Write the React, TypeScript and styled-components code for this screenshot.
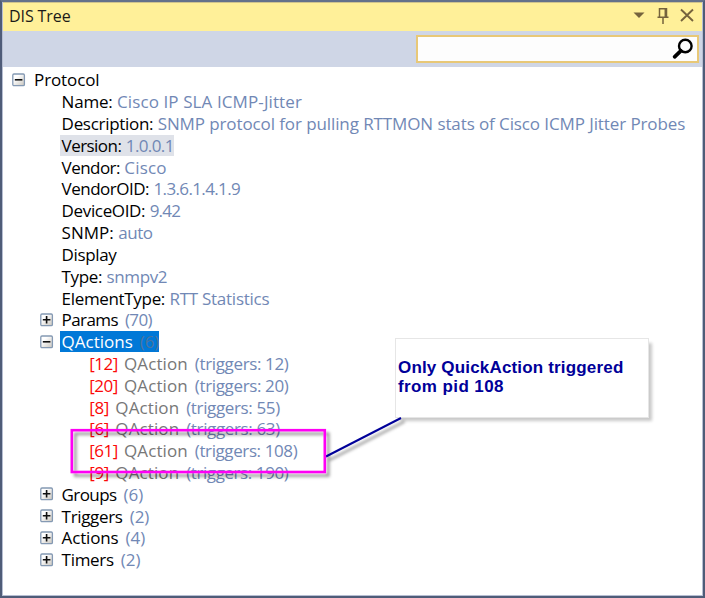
import React from "react";
import styled, { createGlobalStyle } from "styled-components";

const GlobalStyle = createGlobalStyle`
  body { margin: 0; background: #fff; }
  * { box-sizing: border-box; }
`;

const Window = styled.main`
  position: relative;
  width: 705px;
  height: 598px;
  padding: 1px;
  overflow: hidden;
  background: #fff;
  border: 2px solid #4f5c78;
  border-top-color: #64718a;
  box-shadow: inset 1px 0 #b6bed2, inset -1px 0 #b6bed2, inset 0 -1px #b6bed2, inset 0 1px #cfc38e;
  font-family: "Open Sans", "Noto Sans", sans-serif;
  font-size: 17px;
  color: #000;
`;

const TitleBar = styled.header`
  display: flex;
  align-items: center;
  height: 28px;
  padding: 0 7px 0 6px;
  background: #fff099;
`;

const Title = styled.h1`
  flex: 1;
  margin: 0;
  padding-bottom: 2px;
  font-size: 16px;
  font-weight: 400;
  line-height: 22px;
  letter-spacing: -0.1px;
  color: #1c1a18;
`;

const TitleIcons = styled.svg`
  display: block;
  width: 64px;
  height: 28px;
`;

const Toolbar = styled.div`
  display: flex;
  justify-content: flex-end;
  height: 36px;
  padding: 4px 3px 0 0;
  background: #cfd6e6;
`;

const SearchBox = styled.div`
  display: flex;
  justify-content: flex-end;
  width: 283px;
  height: 28px;
  background: #fdfdfd;
  border: 2px solid #e8c877;
`;

const SearchIcon = styled.svg`
  display: block;
  width: 30px;
  height: 24px;
`;

const Tree = styled.ul`
  margin: 0;
  padding: 2px 0 0;
  list-style: none;
`;

const Row = styled.li<{ $depth: number }>`
  display: flex;
  align-items: center;
  height: 21.82px;
  padding-left: ${(p) => 9 + p.$depth * 27.6}px;
`;

const Toggle = styled.svg`
  display: block;
  flex: none;
  width: 14px;
  height: 14px;
  margin-right: 6.5px;
`;

const ToggleGap = styled.span`
  flex: none;
  width: 20.5px;
`;

type Mark = "none" | "hover" | "selected";

const Label = styled.span<{ $mark: Mark }>`
  height: 21px;
  padding: 0 0 0 1.5px;
  line-height: 22px;
  white-space: pre;
  color: ${(p) => (p.$mark === "selected" ? "#fff" : "#000")};
  background: ${(p) => ({ none: "transparent", hover: "#dfe2e9", selected: "#0078d7" })[p.$mark]};
`;

const Name = styled.span<{ $spacing: number; $muted: boolean }>`
  letter-spacing: ${(p) => p.$spacing}px;
  color: ${(p) => (p.$muted ? "#777" : "inherit")};
`;

const Value = styled.span<{ $mark: Mark; $spacing: number; $bracketed: boolean }>`
  margin-left: ${(p) => (p.$bracketed ? 2.6 : 0)}px;
  letter-spacing: ${(p) => p.$spacing}px;
  color: ${(p) => (p.$mark === "selected" ? "#4b759f" : "#7188b5")};
`;

const Id = styled.span<{ $spacing: number }>`
  margin-right: 1.8px;
  letter-spacing: ${(p) => p.$spacing}px;
  color: #fb0808;
`;

const Marker = styled.svg`
  position: absolute;
  left: 0;
  top: 0;
  width: 701px;
  height: 594px;
  pointer-events: none;
`;

const Callout = styled.aside`
  position: absolute;
  left: 393px;
  top: 336px;
  width: 254px;
  height: 80px;
  padding: 19px 0 0 2px;
  background: #fff;
  border: 1px solid #e6e6e6;
  box-shadow: 4px 4px 3px -1px #c9c9c9;
  font: 700 17px/19px "Liberation Sans", Arial, sans-serif;
  color: #000099;
  white-space: nowrap;
`;

const CalloutLine = styled.div<{ $spacing: number }>`
  letter-spacing: ${(p) => p.$spacing}px;
`;

interface Item {
  depth: number;
  toggle?: "plus" | "minus";
  id?: string;
  name: string;
  value?: string;
  mark?: Mark;
  /** Letter spacing of the name and of the value, in pixels. */
  spacing: [number, number];
}

const items: Item[] = [
  { depth: 0, toggle: "minus", name: "Protocol", spacing: [-0.1, 0] },
  { depth: 1, name: "Name:", value: "Cisco IP SLA ICMP-Jitter", spacing: [-0.2, 0.1] },
  {
    depth: 1,
    name: "Description:",
    value: "SNMP protocol for pulling RTTMON stats of Cisco ICMP Jitter Probes",
    spacing: [-0.3, -0.1],
  },
  { depth: 1, name: "Version:", value: "1.0.0.1", mark: "hover", spacing: [-0.55, -0.6] },
  { depth: 1, name: "Vendor:", value: "Cisco", spacing: [-0.55, 0.15] },
  { depth: 1, name: "VendorOID:", value: "1.3.6.1.4.1.9", spacing: [-0.5, -0.63] },
  { depth: 1, name: "DeviceOID:", value: "9.42", spacing: [-0.35, -0.8] },
  { depth: 1, name: "SNMP:", value: "auto", spacing: [0, -0.4] },
  { depth: 1, name: "Display", spacing: [-0.35, 0] },
  { depth: 1, name: "Type:", value: "snmpv2", spacing: [-0.35, -0.4] },
  { depth: 1, name: "ElementType:", value: "RTT Statistics", spacing: [-0.33, -0.26] },
  { depth: 1, toggle: "plus", name: "Params", value: "(70)", spacing: [-0.6, -0.6] },
  { depth: 1, toggle: "minus", name: "QActions", value: "(6)", mark: "selected", spacing: [0, -0.2] },
  { depth: 2, id: "[12]", name: "QAction", value: "(triggers: 12)", spacing: [0.1, -0.36] },
  { depth: 2, id: "[20]", name: "QAction", value: "(triggers: 20)", spacing: [0.1, -0.36] },
  { depth: 2, id: "[8]", name: "QAction", value: "(triggers: 55)", spacing: [0.1, -0.36] },
  { depth: 2, id: "[6]", name: "QAction", value: "(triggers: 63)", spacing: [0.1, -0.36] },
  { depth: 2, id: "[61]", name: "QAction", value: "(triggers: 108)", spacing: [0.1, -0.4] },
  { depth: 2, id: "[9]", name: "QAction", value: "(triggers: 190)", spacing: [0.1, -0.42] },
  { depth: 1, toggle: "plus", name: "Groups", value: "(6)", spacing: [-0.6, 0] },
  { depth: 1, toggle: "plus", name: "Triggers", value: "(2)", spacing: [-0.33, 0] },
  { depth: 1, toggle: "plus", name: "Actions", value: "(4)", spacing: [-0.15, 0] },
  { depth: 1, toggle: "plus", name: "Timers", value: "(2)", spacing: [-0.3, 0] },
];

function ToggleBox({ kind }: { kind: "plus" | "minus" }) {
  return (
    <Toggle viewBox="0 0 14 14">
      <defs>
        <linearGradient id="toggle-face" x1="0" y1="0" x2="1" y2="1">
          <stop offset=".3" stopColor="#fff" />
          <stop offset="1" stopColor="#c9c5bd" />
        </linearGradient>
      </defs>
      <rect x=".8" y="1" width="11.6" height="11.6" rx="1.2" fill="url(#toggle-face)" stroke="#8499b3" strokeWidth="1.3" />
      <path d={kind === "plus" ? "M2.8 6.8h7.6M6.6 3v7.6" : "M2.8 6.8h7.6"} stroke="#111" strokeWidth="1.6" />
    </Toggle>
  );
}

function TreeRow({ item }: { item: Item }) {
  const mark = item.mark ?? "none";
  const [nameSpacing, valueSpacing] = item.spacing;
  return (
    <Row $depth={item.depth}>
      {item.toggle ? <ToggleBox kind={item.toggle} /> : <ToggleGap />}
      <Label $mark={mark}>
        {item.id && (
          <>
            <Id $spacing={item.id.length > 3 ? -0.5 : -0.3}>{item.id}</Id>{" "}
          </>
        )}
        <Name $spacing={nameSpacing} $muted={Boolean(item.id)}>
          {item.name}
        </Name>
        {item.value && (
          <>
            {" "}
            <Value $mark={mark} $spacing={valueSpacing} $bracketed={item.value.startsWith("(")}>
              {item.value}
            </Value>
          </>
        )}
      </Label>
    </Row>
  );
}

export default function App() {
  return (
    <>
      <GlobalStyle />
      <Window>
        <TitleBar>
          <Title>DIS Tree</Title>
          <TitleIcons viewBox="631 3 64 28" fill="none" stroke="#75633d">
            <path d="M633.5 12.5h11l-5.5 5.5z" fill="#75633d" stroke="none" />
            <path d="M659.5 17V8.8h7V17M665.3 9v8M657.5 17.3h11M663 18v6" strokeWidth="1.5" />
            <path d="M681 9.5l12 11.5M693 9.5L681 21" strokeWidth="1.9" />
          </TitleIcons>
        </TitleBar>
        <Toolbar>
          <SearchBox>
            <SearchIcon viewBox="667 37 30 24" fill="none" stroke="#000">
              <circle cx="685.3" cy="46" r="6.3" strokeWidth="2.4" />
              <path d="M680.8 50.8l-6.2 6" strokeWidth="3.7" strokeLinecap="round" />
            </SearchIcon>
          </SearchBox>
        </Toolbar>
        <Tree>
          {items.map((item, i) => (
            <TreeRow key={i} item={item} />
          ))}
        </Tree>
        <Callout>
          <CalloutLine $spacing={0.17}>Only QuickAction triggered</CalloutLine>
          <CalloutLine $spacing={0.4}>from pid 108</CalloutLine>
        </Callout>
        <Marker viewBox="2 2 701 594" fill="none">
          <defs>
            <filter id="marker-shadow" x="-10%" y="-20%" width="120%" height="150%">
              <feDropShadow dx="3.5" dy="3.5" stdDeviation="1.6" floodColor="#000" floodOpacity=".42" />
            </filter>
          </defs>
          <g filter="url(#marker-shadow)">
            <path d="M326 456.5L401 418" stroke="#000099" strokeWidth="2" />
            <rect x="71.8" y="430.2" width="253" height="41.8" stroke="#ff00f5" strokeWidth="2.6" />
          </g>
        </Marker>
      </Window>
    </>
  );
}
